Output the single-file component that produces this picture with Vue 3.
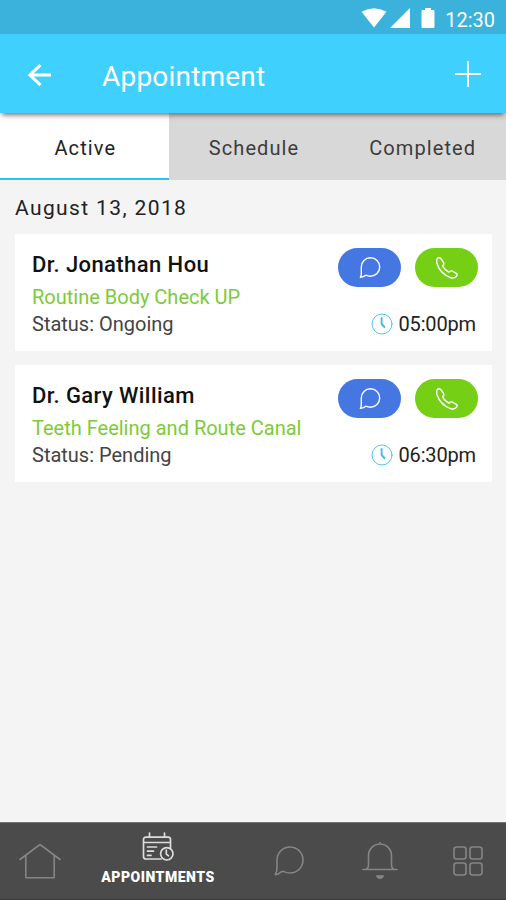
<script setup>
import { ref } from 'vue';

const activeTab = ref('Active');
const tabs = ['Active', 'Schedule', 'Completed'];

const appointments = ref([
  { id: 1, doctor: 'Dr. Jonathan Hou', reason: 'Routine Body Check UP', status: 'Ongoing', time: '05:00pm' },
  { id: 2, doctor: 'Dr. Gary William', reason: 'Teeth Feeling and Route Canal', status: 'Pending', time: '06:30pm' }
]);
</script>

<template>
  <div class="screen">
    <div class="status-bar">
      <svg class="wifi" viewBox="0 0 26 20"><path d="M0.5 3.8Q13-3.4 25.5 3.8L13 19.6Z" /></svg>
      <svg class="signal" viewBox="0 0 20 20"><path d="M20 0V20H0Z" /></svg>
      <svg class="battery" viewBox="0 0 14 20"><path d="M4 0H10V2H12.5Q13.5 2 13.5 3V19Q13.5 20 12.5 20H1.5Q.5 20 .5 19V3Q.5 2 1.5 2H4Z" /></svg>
      <span class="clock">12:30</span>
    </div>

    <header class="app-bar">
      <button class="icon-btn back">
        <svg viewBox="0 0 24 24"><path d="M23 12H2M12.5 1.8L2 12L12.5 22.2" /></svg>
      </button>
      <h1>Appointment</h1>
      <button class="icon-btn add">
        <svg viewBox="0 0 26 26"><path d="M13 0V26M0 13H26" /></svg>
      </button>
    </header>

    <nav class="tabs">
      <button
        v-for="tab in tabs"
        :key="tab"
        class="tab"
        :class="{ active: tab === activeTab }"
        @click="activeTab = tab"
      >{{ tab }}</button>
    </nav>

    <main class="content">
      <h2 class="date">August 13, 2018</h2>

      <div v-for="item in appointments" :key="item.id" class="card">
        <div class="info">
          <h3>{{ item.doctor }}</h3>
          <p class="reason">{{ item.reason }}</p>
          <p class="status">Status: {{ item.status }}</p>
        </div>
        <div class="side">
          <div class="actions">
            <button class="pill chat">
              <svg viewBox="0 0 22 22"><path d="M1.4 20.4Q2.6 18.6 2.3 15.5V10A9.2 9.2 0 1 1 11.5 19.2Q9 19.2 6.8 18.2Q5 20 1.4 20.4Z" /></svg>
            </button>
            <button class="pill call">
              <svg viewBox="0 0 22 22"><path d="M1.8 1Q4 .2 5.2 2L7.6 5.6Q8.4 7.3 6.6 8.8Q7.8 12.2 13 15.2Q14.3 13.4 16.2 14L20.4 16.4Q21.8 17.6 20.4 19.2Q18 22 14.5 20.6Q4 16.5 1 6.5Q0 2.6 1.8 1Z" /></svg>
            </button>
          </div>
          <div class="time">
            <svg viewBox="0 0 22 22"><circle cx="11" cy="11" r="10" /><path d="M10.6 5V11L13.4 14" /></svg>
            <span>{{ item.time }}</span>
          </div>
        </div>
      </div>
    </main>

    <footer class="bottom-nav">
      <a class="nav-item">
        <svg class="home" viewBox="0 0 42 36"><path d="M1 16.5L21 1.5L41 16.5M6.8 12.5V34.8H35.2V12.5" /></svg>
      </a>
      <a class="nav-item current">
        <svg class="calendar" viewBox="0 0 32 30">
          <path d="M19 27H4Q1.5 27 1.5 24.5V7.5Q1.5 5.2 4 5.2H26Q28.5 5.2 28.5 7.5V16M1.5 10.5H28.5M7.5 1V5.2M22.5 1V5.2M5.5 15H14.5M5.5 19.2H11.5M5.5 23.4H9" />
          <circle cx="24.8" cy="21.8" r="6.2" />
          <path d="M24.3 18.2V22L26.5 23.8" />
        </svg>
        <span>APPOINTMENTS</span>
      </a>
      <a class="nav-item">
        <svg class="bubble" viewBox="0 0 30 30"><path d="M1.2 28.6Q3.4 25.5 3 21V14A13 13 0 1 1 16 27Q12.5 27 9.5 25.4Q7.5 25.2 6 26.8Q4.5 28.4 1.2 28.6Z" /></svg>
      </a>
      <a class="nav-item">
        <svg class="bell" viewBox="0 0 36 38">
          <path d="M1 27.5H35M4.5 27Q6.5 26 6.5 23V13.5A11.5 11.5 0 0 1 29.5 13.5V23Q29.5 26 31.5 27M18 2V.5" />
          <path class="clapper" d="M14 33.2H22Q21.3 37 18 37Q14.7 37 14 33.2Z" />
        </svg>
      </a>
      <a class="nav-item more">
        <svg class="grid" viewBox="0 0 30 30">
          <rect x="1" y="1" width="12" height="12" rx="2.5" />
          <rect x="17" y="1" width="12" height="12" rx="2.5" />
          <rect x="1" y="17" width="12" height="12" rx="2.5" />
          <rect x="17" y="17" width="12" height="12" rx="2.5" />
        </svg>
      </a>
    </footer>
  </div>
</template>

<style>
body { margin: 0; background: #f4f4f4; }
</style>

<style scoped>
.screen {
  display: flex; flex-direction: column;
  height: 100vh;
  background: #f4f4f4;
  color: #222;
  font-family: Roboto, 'Liberation Sans', sans-serif;
}

h1, h2, h3, p { margin: 0; font-weight: 400; }
button { border: 0; padding: 0; background: none; font-family: inherit; cursor: pointer; }
svg { display: block; fill: none; stroke-linecap: round; stroke-linejoin: round; }

.status-bar {
  display: flex; align-items: center; justify-content: flex-end;
  height: 34px; box-sizing: border-box; padding: 1px 11px 0 0;
  background: #3ab2dc; color: #fff;
}
.status-bar svg { fill: #fff; height: 20px; }
.wifi { width: 26px; }
.signal { width: 20px; margin-left: 3px; }
.battery { width: 14px; margin-left: 11px; }
.clock { margin-left: 10px; padding-top: 5px; font-size: 20px; line-height: 24px; }

.app-bar {
  display: flex; align-items: center;
  height: 79px; flex-shrink: 0;
  padding: 0 25px 0 28px;
  box-sizing: border-box;
  background: #40d0fd; color: #fff;
  z-index: 1;
  box-shadow: 0 4px 5px -2px rgba(70, 45, 40, 0.7);
}
.app-bar h1 { flex: 1; margin-left: 50px; padding-top: 6px; font-size: 28px; line-height: 34px; letter-spacing: 0.2px; }
.icon-btn svg { stroke: #fff; }
.back svg { width: 24px; height: 24px; stroke-width: 3; stroke-linecap: butt; stroke-linejoin: miter; }
.add svg { width: 26px; height: 26px; stroke-width: 1.8; stroke-linecap: butt; }
.back { padding-top: 3px; }
.add { padding-top: 1px; }

.tabs { display: grid; grid-template-columns: repeat(3, 1fr); height: 67px; flex-shrink: 0; }
.tab { padding: 5px 0 0 2px; background: #d8d8d8; color: #3c3c3c; font-size: 20px; letter-spacing: 1.1px; border-bottom: 2px solid #d8d8d8; }
.tab.active { background: #fff; color: #222; border-bottom-color: #2dc1ee; }

.content { flex: 1; padding: 16px 14px 0 15px; }
.date { font-size: 21px; line-height: 25px; letter-spacing: 1.38px; margin-bottom: 13px; padding-top: 1px; margin-top: -1px; }

.card {
  display: flex; justify-content: space-between;
  height: 117px; box-sizing: border-box;
  padding: 14px 14px 0 17px;
  margin-bottom: 14px;
  background: #fff;
}
.info h3 { padding-top: 1px; font-size: 22px; line-height: 32px; font-weight: 500; letter-spacing: 0.42px; color: #111; }
.reason { margin-top: 3px; font-size: 20px; line-height: 27px; color: #7ccb38; }
.status { font-size: 20px; line-height: 27px; color: #444; }

.actions { display: flex; gap: 14px; }
.pill { display: flex; align-items: center; justify-content: center; width: 63px; height: 39px; border-radius: 20px; }
.pill svg { width: 22px; height: 22px; stroke: #fff; stroke-width: 1.4; }
.pill.chat { background: #4577e3; }
.pill.call { background: #75d015; }

.time { display: flex; align-items: center; justify-content: flex-end; margin-top: 23px; padding-right: 2px; font-size: 20px; line-height: 27px; letter-spacing: -0.15px; }
.time span { padding-top: 1px; }
.time svg { width: 22px; height: 22px; margin-right: 5px; stroke: #3cbdf2; }
.time circle { stroke-width: 0.9; }
.time path { stroke-width: 1.9; }

.bottom-nav {
  display: grid; grid-template-columns: 80px 156px 106px 76px 1fr;
  height: 78px; flex-shrink: 0; box-sizing: border-box;
  background: #4b4b4b;
  border-top: 1px solid #777;
  border-bottom: 1px solid #453438;
}
.nav-item { display: flex; flex-direction: column; align-items: center; justify-content: center; }
.nav-item svg { stroke: #858585; stroke-width: 1.6; }
.nav-item.more { padding-left: 12px; }
.nav-item.current { justify-content: flex-start; padding-top: 9px; color: #fff; }
.nav-item.current svg { stroke: #ddd; stroke-width: 1.7; }
.nav-item.current span { margin-top: 7px; font-size: 14px; line-height: 16px; font-weight: 900; letter-spacing: 0.5px; }
.home { width: 42px; height: 36px; }
.calendar { width: 32px; height: 30px; }
.bubble { width: 30px; height: 30px; }
.bell { width: 36px; height: 38px; }
.bell .clapper { fill: #858585; stroke: none; }
.grid { width: 30px; height: 30px; }
</style>
